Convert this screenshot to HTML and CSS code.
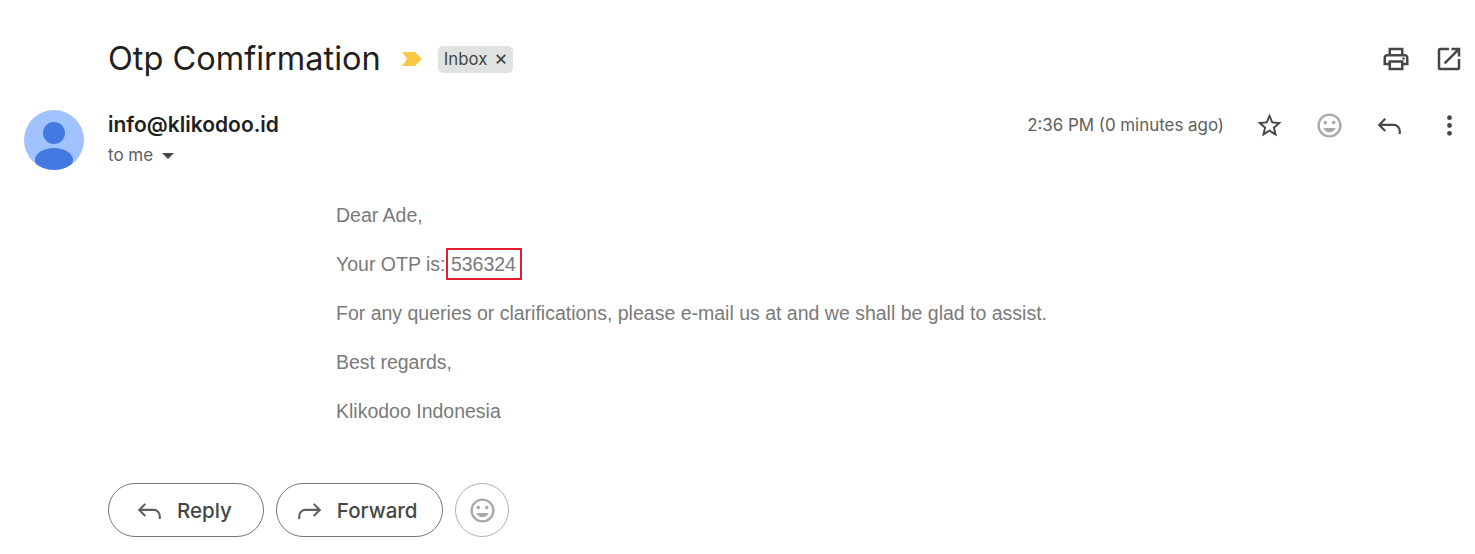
FILE: index.html
```html
<!DOCTYPE html>
<html lang="en">
<head>
  <meta charset="UTF-8" />
  <title>Otp Comfirmation</title>
  <link rel="stylesheet" href="styles.css">
</head>
<body>
  <div class="subject-row">
    <h1 class="subject">Otp Comfirmation</h1>
    <svg class="marker" viewBox="0 0 20 14"><path d="M0 0h13l7 7-7 7H0l5-7z" fill="#f9c845"/></svg>
    <span class="label">Inbox <span class="label-x">×</span></span>
    <div class="subject-tools">
      <svg class="icon icon-large" viewBox="0 0 24 24"><path d="M19 8h-1V3H6v5H5c-1.66 0-3 1.34-3 3v6h4v4h12v-4h4v-6c0-1.66-1.34-3-3-3zM8 5h8v3H8V5zm8 14H8v-4h8v4zm2-4v-2H6v2H4v-4c0-.55.45-1 1-1h14c.55 0 1 .45 1 1v4h-2z"/><circle cx="18" cy="11.5" r="1"/></svg>
      <svg class="icon icon-large" viewBox="0 0 24 24"><path d="M19 19H5V5h7V3H5a2 2 0 0 0-2 2v14a2 2 0 0 0 2 2h14c1.1 0 2-.9 2-2v-7h-2v7zM14 3v2h3.59l-9.83 9.83 1.41 1.41L19 6.41V10h2V3h-7z"/></svg>
    </div>
  </div>

  <div class="sender-row">
    <svg class="avatar" viewBox="0 0 60 60">
      <defs><clipPath id="avatar-clip"><circle cx="30" cy="30" r="30"/></clipPath></defs>
      <circle cx="30" cy="30" r="30" fill="#a0c3ff"/>
      <g clip-path="url(#avatar-clip)" fill="#4479e1">
        <circle cx="30" cy="23" r="11"/>
        <ellipse cx="30" cy="50" rx="19" ry="12"/>
      </g>
    </svg>
    <div class="sender-info">
      <div class="sender-name">info@klikodoo.id</div>
      <div class="sender-to">to me <span class="caret"></span></div>
    </div>
    <div class="sender-tools">
      <span class="time">2:36 PM (0 minutes ago)</span>
      <svg class="icon" viewBox="0 0 24 24"><path d="M22 9.24l-7.19-.62L12 2 9.19 8.63 2 9.24l5.46 4.73L5.82 21 12 17.27 18.18 21l-1.63-7.03L22 9.24zM12 15.4l-3.76 2.27 1-4.28-3.32-2.88 4.38-.38L12 6.1l1.71 4.04 4.38.38-3.32 2.88 1 4.28L12 15.4z"/></svg>
      <svg class="icon icon-faded" viewBox="0 0 24 24"><path d="M11.99 2C6.47 2 2 6.48 2 12s4.47 10 9.99 10C17.52 22 22 17.52 22 12S17.52 2 11.99 2zM12 20c-4.42 0-8-3.58-8-8s3.58-8 8-8 8 3.58 8 8-3.58 8-8 8zm3.5-9c.83 0 1.5-.67 1.5-1.5S16.33 8 15.5 8 14 8.67 14 9.5s.67 1.5 1.5 1.5zm-7 0c.83 0 1.5-.67 1.5-1.5S9.33 8 8.5 8 7 8.67 7 9.5 7.67 11 8.5 11zm3.5 6.5c2.33 0 4.31-1.46 5.11-3.5H6.89c.8 2.04 2.78 3.5 5.11 3.5z"/></svg>
      <svg class="icon" viewBox="0 0 24 24"><path d="M8.5 6.5 3.5 11.5l5 5M4 11.5h11.5a5 5 0 0 1 5 5v2.5" fill="none" stroke="#444746" stroke-width="1.8"/></svg>
      <svg class="icon" viewBox="0 0 24 24"><circle cx="12" cy="5.5" r="2"/><circle cx="12" cy="12" r="2"/><circle cx="12" cy="18.5" r="2"/></svg>
    </div>
  </div>

  <div class="message">
    <p>Dear Ade,</p>
    <p>Your OTP is: <span class="otp">536324</span></p>
    <p>For any queries or clarifications, please e-mail us at and we shall be glad to assist.</p>
    <p>Best regards,</p>
    <p>Klikodoo Indonesia</p>
  </div>

  <div class="actions">
    <button class="pill pill-reply">
      <svg class="icon" viewBox="0 0 24 24"><path d="M8.5 6.5 3.5 11.5l5 5M4 11.5h11.5a5 5 0 0 1 5 5v2.5" fill="none" stroke="#5e5e5e" stroke-width="1.7"/></svg>
      Reply
    </button>
    <button class="pill pill-forward">
      <svg class="icon" viewBox="0 0 24 24"><path d="M15.5 6.5l5 5-5 5M20 11.5H8.5a5 5 0 0 0-5 5v2.5" fill="none" stroke="#5e5e5e" stroke-width="1.7"/></svg>
      Forward
    </button>
    <button class="round">
      <svg class="icon icon-faded" viewBox="0 0 24 24"><path d="M11.99 2C6.47 2 2 6.48 2 12s4.47 10 9.99 10C17.52 22 22 17.52 22 12S17.52 2 11.99 2zM12 20c-4.42 0-8-3.58-8-8s3.58-8 8-8 8 3.58 8 8-3.58 8-8 8zm3.5-9c.83 0 1.5-.67 1.5-1.5S16.33 8 15.5 8 14 8.67 14 9.5s.67 1.5 1.5 1.5zm-7 0c.83 0 1.5-.67 1.5-1.5S9.33 8 8.5 8 7 8.67 7 9.5 7.67 11 8.5 11zm3.5 6.5c2.33 0 4.31-1.46 5.11-3.5H6.89c.8 2.04 2.78 3.5 5.11 3.5z"/></svg>
    </button>
  </div>
</body>
</html>
```

FILE: styles.css
```css
body {
  margin: 0;
  background: #fff;
  font-family: 'Inter', sans-serif;
  color: #1f1f1f;
}

.icon {
  width: 29px;
  height: 29px;
  fill: #444746;
  flex: none;
}

.icon-faded {
  fill: #a8a8a8;
}

.icon-large {
  width: 30px;
  height: 30px;
}

.subject-row {
  display: flex;
  align-items: center;
  height: 40px;
  padding: 39px 11px 0 108px;
}

.subject {
  margin: 0;
  font-size: 32.5px;
  font-weight: 400;
  line-height: 40px;
}

.marker {
  width: 20px;
  height: 14px;
  margin-left: 21px;
}

.label {
  margin-left: 16px;
  padding: 0 5px 0 6px;
  height: 27px;
  line-height: 27px;
  border-radius: 5px;
  background: #e1e3e1;
  color: #444746;
  font-size: 16.8px;
}

.label-x {
  margin-left: 2px;
  font-size: 21px;
  line-height: 20px;
}

.subject-tools {
  margin-left: auto;
  display: flex;
  gap: 23px;
}

.sender-row {
  display: flex;
  margin-top: 31px;
  padding: 0 11px 0 24px;
}

.avatar {
  width: 60px;
  height: 60px;
}

.sender-info {
  margin-left: 24px;
  padding-top: 1px;
}

.sender-name {
  font-size: 21px;
  font-weight: 600;
  line-height: 28px;
}

.sender-to {
  margin-top: 5px;
  font-size: 17px;
  line-height: 22px;
  color: #5e5e5e;
}

.caret {
  display: inline-block;
  margin-left: 4px;
  vertical-align: 2px;
  border: 6.5px solid transparent;
  border-top-color: #444746;
  border-bottom-width: 0;
}

.sender-tools {
  margin-left: auto;
  display: flex;
  align-items: center;
  gap: 31px;
  height: 30px;
}

.time {
  font-size: 16.9px;
  color: #5e5e5e;
}

.message {
  margin-top: 29px;
  padding-left: 336px;
  font-family: 'Liberation Sans', Arial, sans-serif;
  font-size: 19.5px;
  line-height: 33px;
  color: #7a7a7a;
}

.message p {
  margin: 0 0 16px;
}

.otp {
  margin-left: -5px;
  padding: 3px 4px 3px 3px;
  border: 2px solid #e0202e;
}

.actions {
  display: flex;
  gap: 12px;
  margin-top: 55px;
  padding-left: 108px;
}

.pill {
  display: flex;
  align-items: center;
  gap: 13px;
  height: 54px;
  background: #fff;
  border: 1px solid #747775;
  border-radius: 27px;
  font-family: 'Inter', sans-serif;
  font-size: 20.5px;
  font-weight: 500;
  color: #444746;
}

.pill-reply {
  padding: 0 31px 0 26px;
}

.pill-forward {
  padding: 0 25px 0 18px;
}

.round {
  display: flex;
  align-items: center;
  justify-content: center;
  width: 54px;
  height: 54px;
  padding: 0;
  background: #fff;
  border: 1px solid #b0b0b0;
  border-radius: 50%;
}
```
